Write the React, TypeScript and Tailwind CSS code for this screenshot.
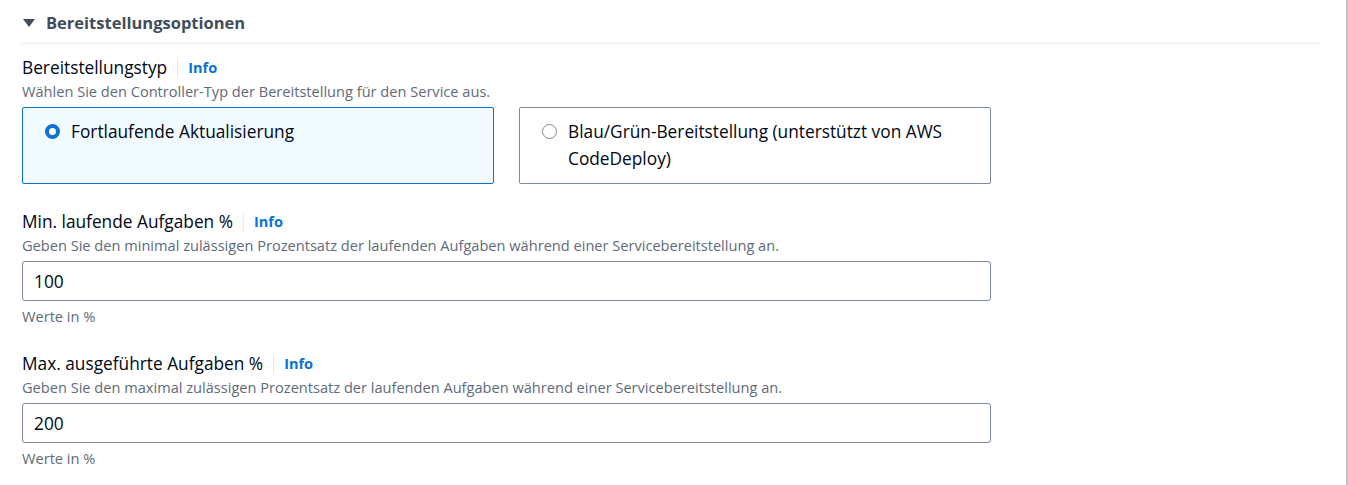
import React, { useState } from 'react';

const font = { fontFamily: '"Open Sans", "Noto Sans", Arial, sans-serif' };

type Option = { id: string; label: string };

const options: Option[] = [
  { id: 'rolling', label: 'Fortlaufende Aktualisierung' },
  { id: 'bluegreen', label: 'Blau/Grün-Bereitstellung (unterstützt von AWS CodeDeploy)' },
];

const FieldLabel: React.FC<{ text: string }> = ({ text }) => (
  <div className="flex items-center h-[24px]">
    <span className="text-[17.3px] text-[#000716]">{text}</span>
    <span className="mx-[10px] h-[20px] w-px bg-[#e9ebed]"></span>
    <span className="text-[14.5px] font-bold text-[#0972d3]">Info</span>
  </div>
);

const PercentField: React.FC<{ label: string; desc: string; value: string }> = ({ label, desc, value }) => (
  <div className="flex flex-col">
    <FieldLabel text={label} />
    <p className="text-[14.6px] leading-[22px] text-[#5f6b7a]">{desc}</p>
    <input
      className="mt-[5px] h-[40px] w-[969px] rounded-[3px] border border-[#7d8998] px-[11px] text-[17.3px] text-[#000716] outline-none"
      defaultValue={value}
      style={font}
    />
    <p className="mt-[4px] text-[14.6px] leading-[22px] text-[#5f6b7a]">Werte in %</p>
  </div>
);

export default function App() {
  const [selected, setSelected] = useState('rolling');

  return (
    <div className="flex h-[485px] w-[1348px] bg-white overflow-hidden" style={font}>
      <div className="flex-1 pl-[22px] pr-[25px]">
        {/* Section header */}
        <div className="flex items-center h-[44px] border-b border-[#e9ebed] pt-[3px]">
          <svg width="12" height="10" viewBox="0 0 12 10" className="ml-[1px]">
            <path d="M0 1 L12 1 L6 9 Z" fill="#414d5c" />
          </svg>
          <span className="ml-[11px] text-[16.5px] font-bold text-[#414d5c]">Bereitstellungsoptionen</span>
        </div>

        {/* Bereitstellungstyp */}
        <div className="mt-[12px]">
          <FieldLabel text="Bereitstellungstyp" />
          <p className="text-[14.6px] leading-[22px] text-[#5f6b7a]">
            Wählen Sie den Controller-Typ der Bereitstellung für den Service aus.
          </p>
          <div className="mt-[5px] flex gap-[25px]">
            {options.map((o) => {
              const active = selected === o.id;
              return (
                <div
                  key={o.id}
                  onClick={() => setSelected(o.id)}
                  className={`flex h-[77px] w-[472px] cursor-pointer items-start rounded-[2px] border pl-[22px] pr-[40px] pt-[10px] ${
                    active ? 'border-[#0972d3] bg-[#f1faff]' : 'border-[#7d8998] bg-white'
                  }`}
                >
                  <span
                    className={`mt-[6px] h-[15px] w-[15px] shrink-0 rounded-full ${
                      active ? 'border-[4px] border-[#0972d3] bg-white' : 'border border-[#7d8998] bg-white'
                    }`}
                  ></span>
                  <span className="ml-[11px] text-[17.3px] leading-[27px] text-[#000716]">{o.label}</span>
                </div>
              );
            })}
          </div>
        </div>

        <div className="mt-[26px]">
          <PercentField
            label="Min. laufende Aufgaben %"
            desc="Geben Sie den minimal zulässigen Prozentsatz der laufenden Aufgaben während einer Servicebereitstellung an."
            value="100"
          />
        </div>
        <div className="mt-[25px]">
          <PercentField
            label="Max. ausgeführte Aufgaben %"
            desc="Geben Sie den maximal zulässigen Prozentsatz der laufenden Aufgaben während einer Servicebereitstellung an."
            value="200"
          />
        </div>
      </div>
      <div className="w-[2px] bg-[#c4c4c4]"></div>
    </div>
  );
}
